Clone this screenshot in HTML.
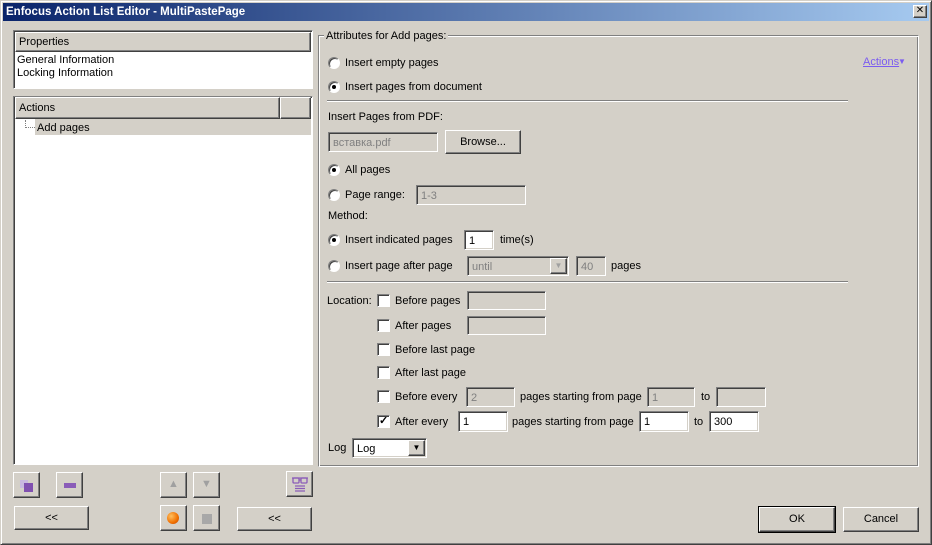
<!DOCTYPE html>
<html><head><meta charset="utf-8"><style>
*{box-sizing:border-box;margin:0;padding:0}
body{width:932px;height:545px;background:#d4d0c8;font-family:"Liberation Sans",sans-serif;font-size:11px;color:#000;position:relative;overflow:hidden}
.a{position:absolute}
.t{position:absolute;line-height:14px;white-space:nowrap}
.in{position:absolute;background:#fff;border-top:1px solid #808080;border-left:1px solid #808080;border-right:1px solid #fff;border-bottom:1px solid #fff;box-shadow:inset 1px 1px 0 #404040,inset -1px -1px 0 #d4d0c8;padding:4px 0 0 4px;line-height:12px}
.dis{background:#d4d0c8;color:#808080}
.btn{position:absolute;background:#d4d0c8;border-top:1px solid #fff;border-left:1px solid #fff;border-right:1px solid #404040;border-bottom:1px solid #404040;box-shadow:inset -1px -1px 0 #808080;text-align:center}
.rad{position:absolute;width:12px;height:12px;border-radius:50%;background:#fff;border:1px solid;border-color:#808080 #fff #fff #808080;box-shadow:inset 1px 1px 0 #404040}
.rad.on::after{content:"";position:absolute;left:3px;top:3px;width:4px;height:4px;border-radius:50%;background:#000}
.chk{position:absolute;width:13px;height:13px;background:#fff;border:1px solid;border-color:#808080 #fff #fff #808080;box-shadow:inset 1px 1px 0 #404040}
.sep{position:absolute;height:2px;border-top:1px solid #808080;border-bottom:1px solid #fff}
.hdr{position:absolute;background:#d4d0c8;border:1px solid;border-color:#fff #404040 #404040 #fff;box-shadow:inset -1px -1px 0 #808080;padding-left:3px;line-height:18px}
</style></head><body>
<div class="a" style="left:0;top:0;width:932px;height:545px;border:1px solid;border-color:#d4d0c8 #404040 #404040 #d4d0c8;box-shadow:inset 1px 1px 0 #fff,inset -1px -1px 0 #808080"></div>
<div class="a" style="left:3px;top:3px;width:926px;height:18px;background:linear-gradient(to right,#0a246a,#a6caf0)"></div>
<div class="t" style="left:6px;top:5px;color:#fff;font-weight:bold;font-size:11.5px">Enfocus Action List Editor - MultiPastePage</div>
<div class="btn" style="left:913px;top:5px;width:14px;height:13px;font-size:10px;line-height:10px">✕</div>

<div class="a" style="left:13px;top:30px;width:300px;height:59px;background:#fff;border:1px solid;border-color:#808080 #fff #fff #808080;box-shadow:inset 1px 1px 0 #404040"></div>
<div class="hdr" style="left:15px;top:32px;width:296px;height:20px;line-height:19px">Properties</div>
<div class="t" style="left:17px;top:53px">General Information</div>
<div class="t" style="left:17px;top:66px">Locking Information</div>

<div class="a" style="left:13px;top:96px;width:300px;height:369px;background:#fff;border:1px solid;border-color:#808080 #fff #fff #808080;box-shadow:inset 1px 1px 0 #404040"></div>
<div class="hdr" style="left:15px;top:97px;width:265px;height:22px;line-height:21px">Actions</div>
<div class="hdr" style="left:280px;top:97px;width:31px;height:22px"></div>
<div class="a" style="left:35px;top:119px;width:276px;height:16px;background:#d4d0c8"></div>
<div class="a" style="left:25px;top:120px;width:1px;height:8px;border-left:1px dotted #808080"></div>
<div class="a" style="left:25px;top:127px;width:10px;height:1px;border-top:1px dotted #808080"></div>
<div class="t" style="left:37px;top:121px">Add pages</div>

<div class="btn" style="left:13px;top:472px;width:27px;height:26px"><div class="a" style="left:6px;top:7px;width:8px;height:8px;background:#c8b8e0"></div><div class="a" style="left:10px;top:10px;width:9px;height:9px;background:#8050b0"></div></div>
<div class="btn" style="left:56px;top:472px;width:27px;height:26px"><div class="a" style="left:7px;top:10px;width:12px;height:5px;background:#8a5cb8"></div></div>
<div class="btn" style="left:160px;top:472px;width:27px;height:26px;color:#a0a0a0;font-size:11px;line-height:23px">▲</div>
<div class="btn" style="left:193px;top:472px;width:27px;height:26px;color:#a0a0a0;font-size:11px;line-height:23px">▼</div>
<div class="btn" style="left:286px;top:471px;width:27px;height:26px"><svg class="a" style="left:4px;top:3px" width="18" height="18"><g fill="none" stroke="#8a5cb8" stroke-width="1.3"><rect x="2" y="3" width="6" height="5" rx="1"/><rect x="10" y="3" width="6" height="5" rx="1"/><path d="M8 5h2M1 3h16M4 11h10M4 13.5h10M4 16h10"/></g></svg></div>
<div class="btn" style="left:14px;top:506px;width:75px;height:24px;line-height:23px">&lt;&lt;</div>
<div class="btn" style="left:160px;top:505px;width:27px;height:26px"><div class="a" style="left:6px;top:6px;width:12px;height:12px;border-radius:50%;background:radial-gradient(circle at 35% 35%,#ffc060,#f07000 60%,#c04000)"></div></div>
<div class="btn" style="left:193px;top:505px;width:27px;height:26px"><div class="a" style="left:8px;top:8px;width:10px;height:10px;background:#a8a8a8"></div></div>
<div class="btn" style="left:237px;top:507px;width:75px;height:24px;line-height:23px">&lt;&lt;</div>

<div class="a" style="left:318px;top:35px;width:601px;height:432px;border:1px solid;border-color:#808080 #fff #fff #808080;box-shadow:inset 1px 1px 0 #fff,inset -1px -1px 0 #808080"></div>
<div class="t" style="left:324px;top:29px;background:#d4d0c8;padding:0 2px">Attributes for Add pages:</div>
<div class="t" style="left:863px;top:55px;color:#7b5cf0;text-decoration:underline">Actions</div><div class="t" style="left:898px;top:55px;color:#7b5cf0;font-size:8px">▼</div>

<div class="rad" style="left:328px;top:57px"></div><div class="t" style="left:345px;top:56px">Insert empty pages</div>
<div class="rad on" style="left:328px;top:81px"></div><div class="t" style="left:345px;top:80px">Insert pages from document</div>
<div class="sep" style="left:327px;top:100px;width:521px"></div>
<div class="t" style="left:328px;top:110px">Insert Pages from PDF:</div>
<div class="in dis" style="left:328px;top:132px;width:110px;height:20px">вставка.pdf</div>
<div class="btn" style="left:445px;top:130px;width:76px;height:24px;line-height:23px">Browse...</div>
<div class="rad on" style="left:328px;top:164px"></div><div class="t" style="left:345px;top:163px">All pages</div>
<div class="rad" style="left:328px;top:189px"></div><div class="t" style="left:345px;top:188px">Page range:</div>
<div class="in dis" style="left:416px;top:185px;width:110px;height:20px">1-3</div>
<div class="t" style="left:328px;top:209px">Method:</div>
<div class="rad on" style="left:328px;top:234px"></div><div class="t" style="left:345px;top:233px">Insert indicated pages</div>
<div class="in" style="left:464px;top:230px;width:30px;height:20px">1</div>
<div class="t" style="left:500px;top:233px">time(s)</div>
<div class="rad" style="left:328px;top:260px"></div><div class="t" style="left:345px;top:259px">Insert page after page</div>
<div class="in dis" style="left:467px;top:256px;width:102px;height:20px">until</div>
<div class="btn" style="left:550px;top:258px;width:17px;height:16px;color:#a0a0a0;font-size:8px;line-height:14px">▼</div>
<div class="in dis" style="left:576px;top:256px;width:30px;height:20px">40</div>
<div class="t" style="left:611px;top:259px">pages</div>
<div class="sep" style="left:327px;top:281px;width:521px"></div>

<div class="t" style="left:327px;top:294px">Location:</div>
<div class="chk" style="left:377px;top:294px"></div><div class="t" style="left:395px;top:294px">Before pages</div>
<div class="in dis" style="left:467px;top:291px;width:79px;height:19px"></div>
<div class="chk" style="left:377px;top:319px"></div><div class="t" style="left:395px;top:319px">After pages</div>
<div class="in dis" style="left:467px;top:316px;width:79px;height:19px"></div>
<div class="chk" style="left:377px;top:343px"></div><div class="t" style="left:395px;top:343px">Before last page</div>
<div class="chk" style="left:377px;top:366px"></div><div class="t" style="left:395px;top:366px">After last page</div>
<div class="chk" style="left:377px;top:390px"></div><div class="t" style="left:395px;top:390px">Before every</div>
<div class="in dis" style="left:466px;top:387px;width:49px;height:20px">2</div>
<div class="t" style="left:520px;top:390px">pages starting from page</div>
<div class="in dis" style="left:647px;top:387px;width:48px;height:20px">1</div>
<div class="t" style="left:701px;top:390px">to</div>
<div class="in dis" style="left:716px;top:387px;width:50px;height:20px"></div>
<div class="chk" style="left:377px;top:415px"><span class="a" style="left:1px;top:-2px;font-size:11px;font-weight:bold">✓</span></div><div class="t" style="left:395px;top:415px">After every</div>
<div class="in" style="left:458px;top:411px;width:50px;height:21px">1</div>
<div class="t" style="left:512px;top:415px">pages starting from page</div>
<div class="in" style="left:639px;top:411px;width:50px;height:21px">1</div>
<div class="t" style="left:694px;top:415px">to</div>
<div class="in" style="left:709px;top:411px;width:50px;height:21px">300</div>
<div class="t" style="left:328px;top:441px">Log</div>
<div class="in" style="left:352px;top:438px;width:75px;height:20px">Log</div>
<div class="btn" style="left:408px;top:440px;width:17px;height:16px;font-size:8px;line-height:14px">▼</div>

<div class="btn" style="left:759px;top:507px;width:76px;height:25px;line-height:23px;outline:1px solid #000">OK</div>
<div class="btn" style="left:843px;top:507px;width:76px;height:25px;line-height:23px">Cancel</div>
</body></html>
